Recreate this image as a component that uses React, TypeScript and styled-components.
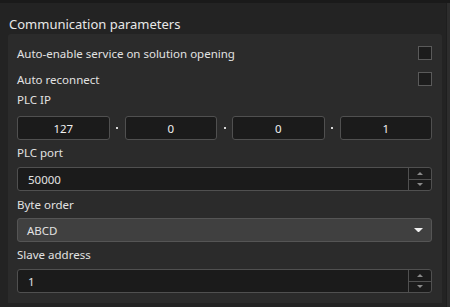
import React from "react";
import styled, { createGlobalStyle } from "styled-components";

const Global = createGlobalStyle`
  html, body { margin: 0; padding: 0; background: #232323; }
  * { box-sizing: border-box; }
`;

const Frame = styled.div`
  width: 450px;
  height: 307px;
  display: flex;
  flex-direction: column;
  background: #232323;
  font-family: "Noto Sans", "Open Sans", sans-serif;
  color: #e2e2e2;
  overflow: hidden;
`;

const TopEdge = styled.div`
  height: 3px;
  background: #1a1a1a;
  flex: none;
`;

const Body = styled.div`
  flex: 1;
  display: flex;
`;

const Main = styled.div`
  flex: 1;
  display: flex;
  flex-direction: column;
`;

const ScrollStrip = styled.div`
  width: 4px;
  background: #2d2d2d;
  margin-left: 4px;
  border-left: 1px solid #1e1e1e;
`;

const Title = styled.div`
  font-size: 13px;
  line-height: 20px;
  padding: 11px 0 0 9px;
  color: #e8e8e8;
`;

const Panel = styled.div`
  margin-left: 8px;
  height: 269px;
  background: #2b2b2b;
  border-radius: 3px 3px 0 0;
  padding: 6px 10px 0 9px;
  display: flex;
  flex-direction: column;
`;

const CheckRow = styled.div`
  display: flex;
  align-items: center;
  justify-content: space-between;
  height: 26px;
  font-size: 11.5px;
`;

const Check = styled.div`
  width: 14px;
  height: 14px;
  border: 1px solid #5a5a5a;
  background: #1c1c1c;
`;

const Label = styled.div<{ $top: number; $bottom: number }>`
  font-size: 11.5px;
  line-height: 16px;
  padding: ${(p) => p.$top}px 0 ${(p) => p.$bottom}px 0;
`;

const IpRow = styled.div`
  display: grid;
  grid-template-columns: 1fr 15px 1fr 15px 1fr 15px 1fr;
  align-items: center;
  height: 24px;
`;

const Box = styled.div`
  height: 24px;
  border: 1px solid #505050;
  border-radius: 3px;
  background: #1b1b1b;
  font-size: 11.5px;
  display: flex;
  align-items: center;
`;

const IpBox = styled(Box)`
  justify-content: center;
  color: #f0f0f0;
`;

const Dot = styled.div`
  width: 2px;
  height: 2px;
  background: #d8d8d8;
  justify-self: center;
`;

const SpinBox = styled(Box)`
  align-items: stretch;
`;

const SpinValue = styled.div`
  flex: 1;
  padding-left: 10px;
  display: flex;
  align-items: center;
`;

const SpinButtons = styled.div`
  width: 23px;
  border-left: 1px solid #505050;
  display: flex;
  flex-direction: column;
`;

const SpinButton = styled.div<{ $top?: boolean }>`
  flex: 1;
  display: flex;
  align-items: center;
  justify-content: center;
  border-bottom: ${(p) => (p.$top ? "1px solid #505050" : "none")};
`;

const Select = styled(Box)`
  background: #404040;
  border-color: #555;
  justify-content: space-between;
  padding: 0 8px 0 9px;
`;

const Arrow = ({ up, color = "#8a8a8a", w = 6 }: { up?: boolean; color?: string; w?: number }) => (
  <svg width={w} height={w / 2} viewBox="0 0 6 3">
    <path d={up ? "M0 3 L3 0 L6 3 Z" : "M0 0 L6 0 L3 3 Z"} fill={color} />
  </svg>
);

const Spin = ({ value }: { value: string }) => (
  <SpinBox>
    <SpinValue>{value}</SpinValue>
    <SpinButtons>
      <SpinButton $top>
        <Arrow up />
      </SpinButton>
      <SpinButton>
        <Arrow />
      </SpinButton>
    </SpinButtons>
  </SpinBox>
);

export default function App() {
  return (
    <>
      <Global />
      <Frame>
        <TopEdge />
        <Body>
          <Main>
            <Title>Communication parameters</Title>
            <Panel>
              <CheckRow>
                <span>Auto-enable service on solution opening</span>
                <Check />
              </CheckRow>
              <CheckRow>
                <span>Auto reconnect</span>
                <Check />
              </CheckRow>
              <Label $top={0} $bottom={8}>PLC IP</Label>
              <IpRow>
                <IpBox>127</IpBox>
                <Dot />
                <IpBox>0</IpBox>
                <Dot />
                <IpBox>0</IpBox>
                <Dot />
                <IpBox>1</IpBox>
              </IpRow>
              <Label $top={5} $bottom={6}>PLC port</Label>
              <Spin value="50000" />
              <Label $top={6} $bottom={5}>Byte order</Label>
              <Select>
                <span>ABCD</span>
                <Arrow color="#f0f0f0" w={9} />
              </Select>
              <Label $top={5} $bottom={6}>Slave address</Label>
              <Spin value="1" />
            </Panel>
          </Main>
          <ScrollStrip />
        </Body>
      </Frame>
    </>
  );
}
